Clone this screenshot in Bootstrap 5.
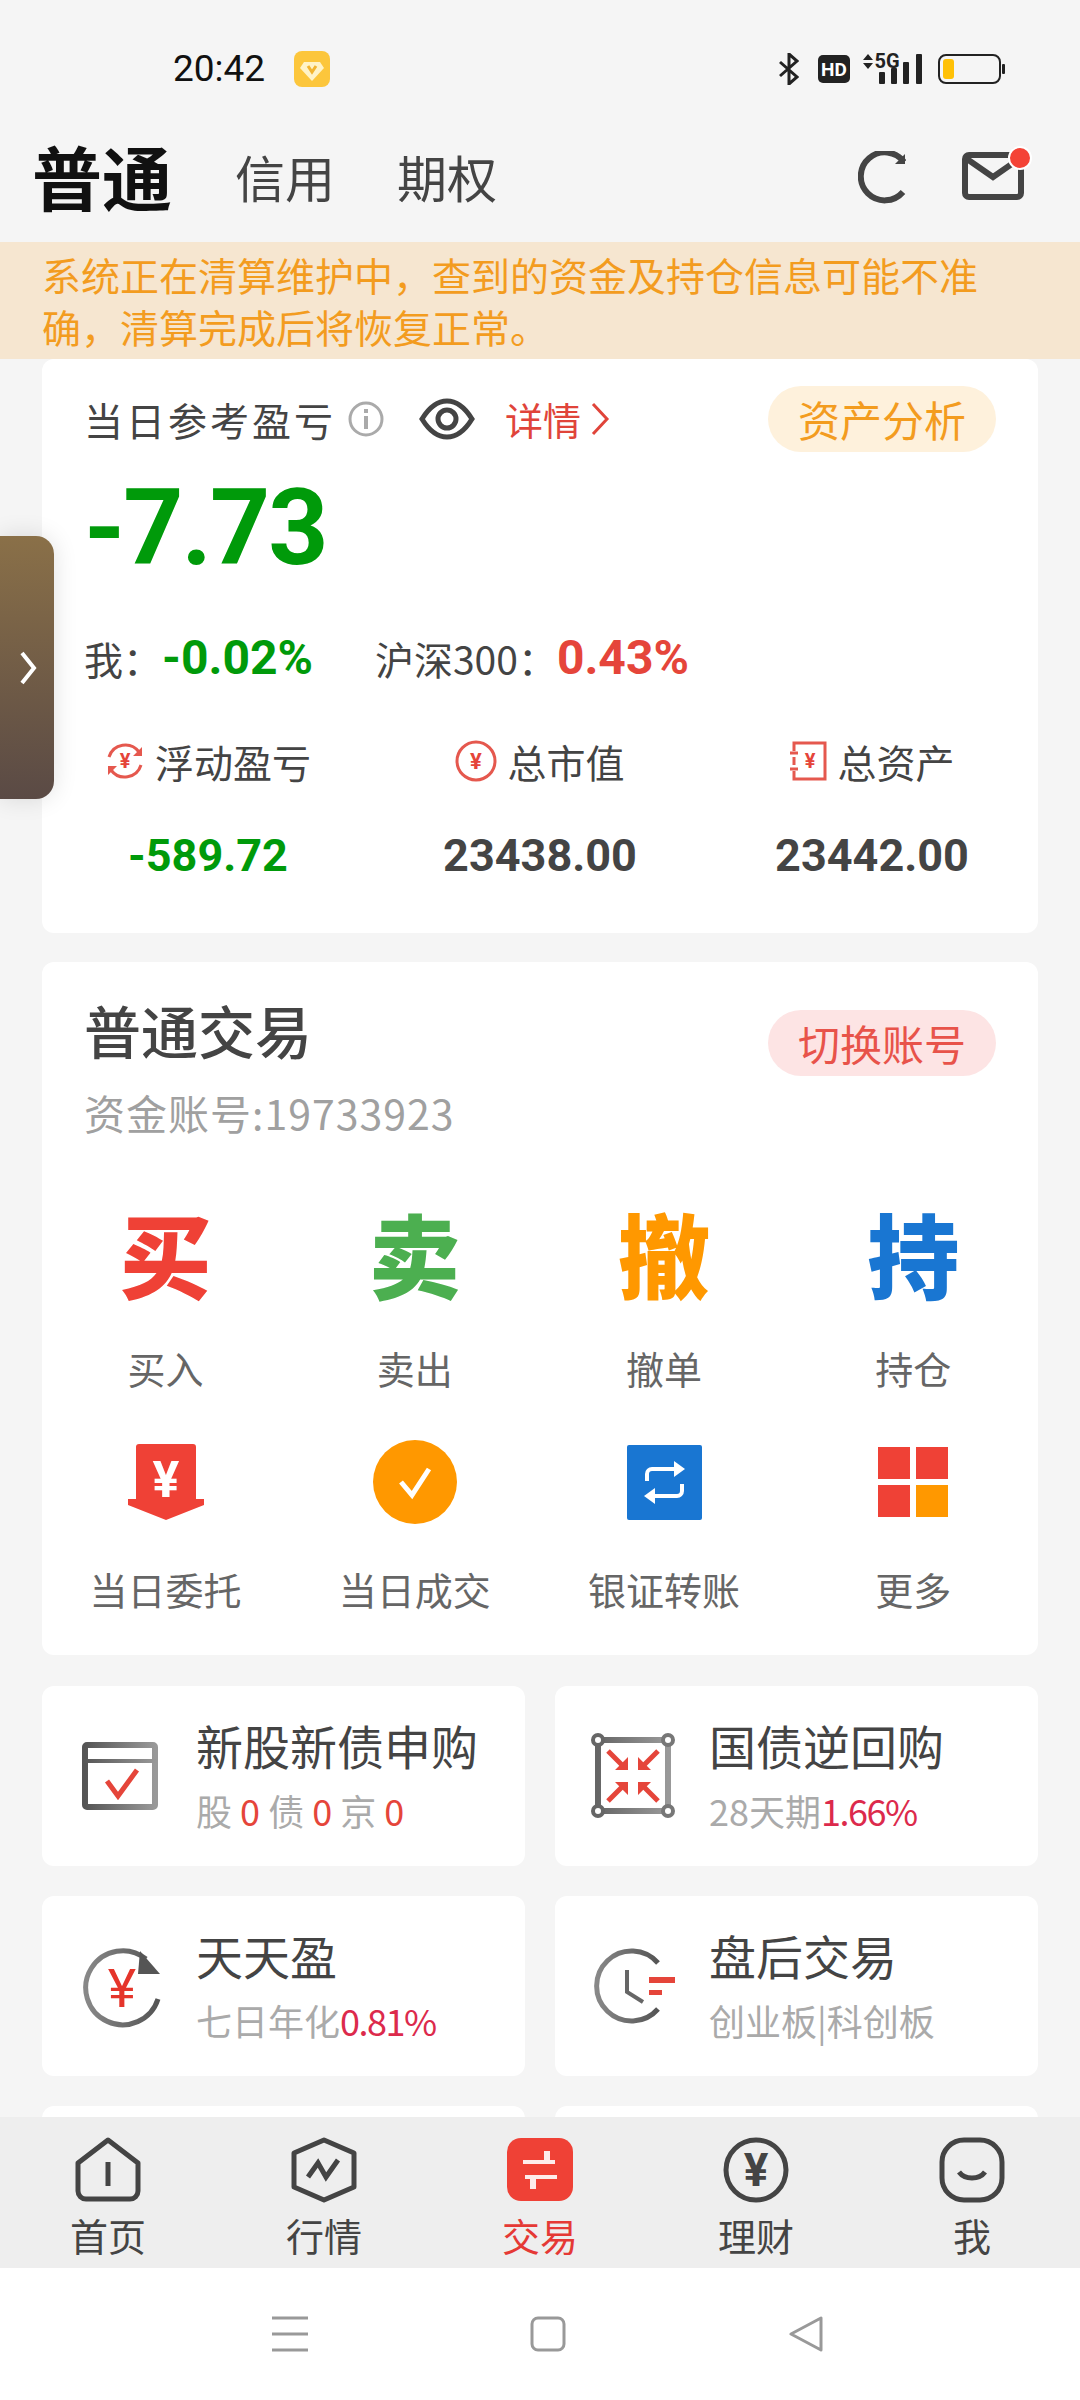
<!DOCTYPE html>
<html lang="zh-CN">
<head>
    <meta charset="UTF-8">
    <meta name="viewport" content="width=device-width, initial-scale=1.0">
    <title>普通交易</title>
    <link rel="stylesheet" href="https://cdn.jsdelivr.net/npm/bootstrap@5.3.0/dist/css/bootstrap.min.css">
    <style>
        body { width: 1080px; height: 2400px; overflow: hidden; background: #f5f5f5; color: #444; font-family: "Noto Sans CJK SC", "Noto Sans", sans-serif; }
        svg { display: block; flex: none; }
        svg text { font-family: Roboto, sans-serif; font-weight: 700; text-anchor: middle; }
        svg text.yen-light { font-weight: 400; }
        .num { font-family: Roboto, "Liberation Sans", sans-serif; font-weight: 700; }
        .status-bar { height: 110px; padding: 28px 75px 0 173px; }
        .clock { font-family: Roboto, sans-serif; font-size: 37px; color: #111; }
        .vip-badge { margin-left: 29px; }
        .st-hd { margin-left: 19px; }
        .st-net { margin-left: 12px; }
        .st-batt { margin-left: 14px; }
        .top-bar { height: 132px; padding: 0 56px 0 32px; }
        .top-main { font-size: 70px; font-weight: 700; color: #111; margin-right: 63px; line-height: 1; }
        .top-sub { font-size: 50px; color: #444; margin-right: 62px; line-height: 1; }
        .top-refresh { margin-top: 3px; }
        .mail-box { margin-left: 56px; }
        .mail-dot { width: 24px; height: 24px; background: #f44336; border: 2px solid #fff; right: -8px; top: -6px; }
        .notice-bar { background: #f6e6d0; color: #f39c1f; font-size: 39px; line-height: 52px; padding: 6px 80px 0 42px; height: 117px; }
        .scroller { height: 1758px; overflow: hidden; padding: 0 42px; }
        .panel { border: 0; border-radius: 12px; background: #fff; }
        .panel-profit { height: 574px; padding: 27px 42px 0 42px; }
        .profit-label { font-size: 39px; letter-spacing: 3px; color: #444; }
        .info-icon { margin-left: 12px; }
        .eye-icon { margin-left: 35px; }
        .detail-link { font-size: 38px; color: #e0443a; line-height: 1; margin-left: 30px; }
        .detail-arrow { margin-left: 9px; }
        .pill-btn { width: 228px; height: 66px; border-radius: 33px; font-size: 42px; line-height: 1; }
        .pill-orange { background: #fef1dc; color: #f39c1f; }
        .pill-red { background: #fde4e4; color: #e8534a; margin-top: 16px; }
        .row-top { height: 66px; }
        .profit-big { height: 146px; font-size: 105px; line-height: 154px; color: #009a0a; letter-spacing: -2px; }
        .row-compare { height: 120px; font-size: 39px; }
        .row-compare .num { font-size: 48px; }
        .compare-index { margin-left: 62px; }
        .text-up { color: #e5453a; }
        .text-down { color: #009a0a; }
        .metric-grid { margin: 0 -42px; display: grid; grid-template-columns: repeat(3, 332px); }
        .metric-head { height: 86px; font-size: 39px; gap: 10px; }
        .metric-value { height: 104px; font-size: 45px; color: #444; }
        .metric-value.text-down { color: #009a0a; }
        .panel-trade { height: 693px; margin-top: 29px; padding-top: 32px; }
        .trade-head { padding: 0 42px; height: 75px; }
        .trade-title { font-size: 57px; font-weight: 500; line-height: 70px; }
        .account-no { font-size: 41px; letter-spacing: 1px; line-height: 60px; color: #a0a0a0; padding-left: 42px; margin-top: 13px; }
        .action-grid { display: grid; grid-template-columns: repeat(4, 1fr); row-gap: 39px; margin-top: 69px; margin-left: -1px; }
        .action-pic { height: 100px; }
        .action-word { font-size: 92px; font-weight: 900; line-height: 1; padding-bottom: 18px; }
        .action-label { height: 50px; margin-top: 32px; font-size: 38px; line-height: 50px; color: #666; }
        .word-buy { color: #ef4136; }
        .word-sell { color: #4caf50; }
        .word-undo { color: #ff9800; }
        .word-hold { color: #1976d2; }
        .tile-grid { display: grid; grid-template-columns: 483px 483px; gap: 30px; margin-top: 31px; }
        .tile { height: 180px; padding-left: 36px; }
        .tile-pic { width: 118px; }
        .tile-title { font-size: 47px; line-height: 50px; color: #444; padding-top: 2px; }
        .tile-sub { font-size: 36px; line-height: 50px; color: #aaa; margin-top: 15px; white-space: nowrap; }
        .tile-red { color: #e5453a; }
        .tile-rose { color: #dc2a4c; letter-spacing: -1.5px; }
        .tab-bar { height: 151px; background: #eee; padding-top: 20px; }
        .tab-item { width: 216px; }
        .tab-label { font-size: 38px; line-height: 50px; margin-top: 7px; color: #444; }
        .tab-on { color: #e53935; }
        .sys-nav { height: 132px; background: #fff; padding-left: 16px; gap: 222px; }
        .side-handle { left: 0; top: 536px; width: 54px; height: 263px; border-radius: 0 18px 18px 0; background: linear-gradient(#8a7048, #5a4a45); box-shadow: 0 0 24px rgba(0,0,0,.12); padding-left: 19px; }
    </style>
</head>
<body class="position-relative">

    <div class="status-bar d-flex align-items-center">
        <span class="clock">20:42</span>
        <svg class="vip-badge" width="36" height="36" viewBox="0 0 36 36">
            <rect width="36" height="36" rx="8" fill="#fcc63c"/>
            <path d="M10 11h16l4 6-12 13L6 17z" fill="#fff3c8"/>
            <path d="M14 15l4 6 4-6" fill="none" stroke="#f2b430" stroke-width="3"/>
        </svg>
        <div class="ms-auto d-flex align-items-center">
            <svg width="21" height="32" viewBox="0 0 21 32"><path d="M2 9l17 15-8 7V1l8 7L2 23" fill="none" stroke="#222" stroke-width="3"/></svg>
            <svg class="st-hd" width="32" height="28" viewBox="0 0 32 28">
                <rect width="32" height="28" rx="5" fill="#222"/>
                <text x="16" y="21" font-size="19" fill="#fff">HD</text>
            </svg>
            <svg class="st-net" width="62" height="32" viewBox="0 0 62 32">
                <path d="M1 7l5-6 5 6zM1 10l5 6 5-6z" fill="#222"/>
                <text x="25" y="15" font-size="20" fill="#222">5G</text>
                <rect x="17" y="19" width="6" height="12" rx="1" fill="#222"/>
                <rect x="29" y="15" width="6" height="16" rx="1" fill="#222"/>
                <rect x="41" y="9" width="6" height="22" rx="1" fill="#222"/>
                <rect x="54" y="1" width="6" height="30" rx="1" fill="#222"/>
            </svg>
            <svg class="st-batt" width="67" height="30" viewBox="0 0 67 30">
                <rect x="1" y="1" width="61" height="28" rx="7" fill="none" stroke="#222" stroke-width="2"/>
                <rect x="5" y="5" width="11" height="20" rx="3" fill="#ffc107"/>
                <rect x="64" y="10" width="3" height="10" rx="1" fill="#222"/>
            </svg>
        </div>
    </div>

    <div class="top-bar d-flex align-items-center">
        <span class="top-main">普通</span>
        <span class="top-sub">信用</span>
        <span class="top-sub">期权</span>
        <svg class="top-refresh ms-auto" width="48" height="54" viewBox="0 0 48 54">
            <path d="M46 11A24 24 0 1 0 45 41" fill="none" stroke="#444" stroke-width="6"/>
            <path d="M47 3v10H37z" fill="#444"/>
        </svg>
        <div class="mail-box position-relative">
            <svg width="62" height="48" viewBox="0 0 62 48">
                <rect x="3" y="3" width="56" height="42" rx="4" fill="none" stroke="#444" stroke-width="6"/>
                <path d="M5 7l26 18 26-18" fill="none" stroke="#444" stroke-width="6"/>
            </svg>
            <span class="mail-dot position-absolute rounded-circle"></span>
        </div>
    </div>

    <div class="notice-bar">系统正在清算维护中，查到的资金及持仓信息可能不准确，清算完成后将恢复正常。</div>

    <div class="scroller">
        <div class="card panel panel-profit">
            <div class="row-top d-flex flex-row align-items-center">
                <span class="profit-label">当日参考盈亏</span>
                <svg class="info-icon" width="36" height="36" viewBox="0 0 36 36">
                    <circle cx="18" cy="18" r="16" fill="none" stroke="#aaa" stroke-width="3"/>
                    <rect x="16" y="15" width="4" height="13" fill="#aaa"/>
                    <rect x="16" y="8" width="4" height="4" fill="#aaa"/>
                </svg>
                <svg class="eye-icon" width="56" height="42" viewBox="0 0 56 42">
                    <path d="M3 21C11 8 19 3 28 3s17 5 25 18C45 34 37 39 28 39S11 34 3 21z" fill="none" stroke="#444" stroke-width="5"/>
                    <circle cx="28" cy="21" r="9" fill="none" stroke="#444" stroke-width="5"/>
                </svg>
                <span class="detail-link">详情</span>
                <svg class="detail-arrow" width="20" height="34" viewBox="0 0 20 34"><path d="M3 2l14 15L3 32" fill="none" stroke="#e0443a" stroke-width="3"/></svg>
                <span class="pill-btn pill-orange ms-auto d-flex align-items-center justify-content-center">资产分析</span>
            </div>
            <div class="profit-big num">-7.73</div>
            <div class="row-compare d-flex align-items-center">
                <span>我：</span>
                <span class="num text-down">-0.02%</span>
                <span class="compare-index">沪深300：</span>
                <span class="num text-up">0.43%</span>
            </div>
            <div class="metric-grid">
                <div>
                    <div class="metric-head d-flex align-items-center justify-content-center">
                        <svg width="40" height="42" viewBox="0 0 40 42">
                            <path d="M4 17A17 17 0 0 1 34 12M36 25A17 17 0 0 1 6 30" fill="none" stroke="#e5584e" stroke-width="3"/>
                            <path d="M37 7v9h-9zM3 35v-9h9z" fill="#e5584e"/>
                            <text x="20" y="28" font-size="20" fill="#e5453a">¥</text>
                        </svg>
                        <span>浮动盈亏</span>
                    </div>
                    <div class="metric-value num text-down d-flex align-items-center justify-content-center">-589.72</div>
                </div>
                <div>
                    <div class="metric-head d-flex align-items-center justify-content-center">
                        <svg width="42" height="42" viewBox="0 0 42 42">
                            <circle cx="21" cy="21" r="19" fill="none" stroke="#e5584e" stroke-width="3"/>
                            <text x="21" y="29" font-size="22" fill="#e5453a">¥</text>
                        </svg>
                        <span>总市值</span>
                    </div>
                    <div class="metric-value num d-flex align-items-center justify-content-center">23438.00</div>
                </div>
                <div>
                    <div class="metric-head d-flex align-items-center justify-content-center">
                        <svg width="38" height="40" viewBox="0 0 38 40">
                            <path d="M5 10V2h31v36H5v-8M5 16v8" fill="none" stroke="#e5584e" stroke-width="3"/>
                            <path d="M1 12h8M1 28h8" stroke="#e5584e" stroke-width="3"/>
                            <text x="21" y="27" font-size="20" fill="#e5453a">¥</text>
                        </svg>
                        <span>总资产</span>
                    </div>
                    <div class="metric-value num d-flex align-items-center justify-content-center">23442.00</div>
                </div>
            </div>
        </div>

        <div class="card panel panel-trade">
            <div class="trade-head d-flex justify-content-between align-items-start">
                <span class="trade-title">普通交易</span>
                <span class="pill-btn pill-red d-flex align-items-center justify-content-center">切换账号</span>
            </div>
            <div class="account-no">资金账号:19733923</div>
            <div class="action-grid text-center">
                <div>
                    <div class="action-pic d-flex align-items-center justify-content-center action-word word-buy">买</div>
                    <div class="action-label">买入</div>
                </div>
                <div>
                    <div class="action-pic d-flex align-items-center justify-content-center action-word word-sell">卖</div>
                    <div class="action-label">卖出</div>
                </div>
                <div>
                    <div class="action-pic d-flex align-items-center justify-content-center action-word word-undo">撤</div>
                    <div class="action-label">撤单</div>
                </div>
                <div>
                    <div class="action-pic d-flex align-items-center justify-content-center action-word word-hold">持</div>
                    <div class="action-label">持仓</div>
                </div>
                <div>
                    <div class="action-pic d-flex align-items-center justify-content-center">
                        <svg width="76" height="76" viewBox="0 0 76 76">
                            <path d="M11 0h54a3 3 0 0 1 3 3v52h8v6L38 76 0 61v-6h8V3a3 3 0 0 1 3-3z" fill="#ef4136"/>
                            <text x="38" y="53" font-size="50" fill="#fff">¥</text>
                        </svg>
                    </div>
                    <div class="action-label">当日委托</div>
                </div>
                <div>
                    <div class="action-pic d-flex align-items-center justify-content-center">
                        <svg width="84" height="84" viewBox="0 0 84 84">
                            <circle cx="42" cy="42" r="42" fill="#ff9800"/>
                            <path d="M28 42l11 13 17-26" fill="none" stroke="#fff" stroke-width="5"/>
                        </svg>
                    </div>
                    <div class="action-label">当日成交</div>
                </div>
                <div>
                    <div class="action-pic d-flex align-items-center justify-content-center">
                        <svg width="75" height="75" viewBox="0 0 75 75">
                            <rect width="75" height="75" rx="2" fill="#1976d2"/>
                            <path d="M20 36v-7a5 5 0 0 1 5-5h24M55 39v7a5 5 0 0 1-5 5H26" fill="none" stroke="#fff" stroke-width="4"/>
                            <path d="M47 16l11 8-11 8zM28 43l-11 8 11 8z" fill="#fff"/>
                        </svg>
                    </div>
                    <div class="action-label">银证转账</div>
                </div>
                <div>
                    <div class="action-pic d-flex align-items-center justify-content-center">
                        <svg width="70" height="70" viewBox="0 0 70 70">
                            <rect width="32" height="32" fill="#ef4136"/>
                            <rect x="38" width="32" height="32" fill="#ef4136"/>
                            <rect y="38" width="32" height="32" fill="#ef4136"/>
                            <rect x="38" y="38" width="32" height="32" fill="#ff9800"/>
                        </svg>
                    </div>
                    <div class="action-label">更多</div>
                </div>
            </div>
        </div>

        <div class="tile-grid">
            <div class="card panel tile flex-row align-items-center">
                <div class="tile-pic">
                    <svg width="90" height="90" viewBox="0 0 90 90">
                        <defs><linearGradient id="grayA" x1="0" x2="1" y1="0" y2="0"><stop offset="0" stop-color="#555"/><stop offset="1" stop-color="#999"/></linearGradient></defs>
                        <rect x="7" y="14" width="70" height="62" rx="2" fill="none" stroke="url(#grayA)" stroke-width="6"/>
                        <rect x="5" y="28" width="74" height="4" fill="url(#grayA)"/>
                        <path d="M29 50l11 15 19-26" fill="none" stroke="#e5453a" stroke-width="5"/>
                    </svg>
                </div>
                <div>
                    <div class="tile-title">新股新债申购</div>
                    <div class="tile-sub">股 <span class="tile-red">0</span> 债 <span class="tile-red">0</span> 京 <span class="tile-red">0</span></div>
                </div>
            </div>
            <div class="card panel tile flex-row align-items-center">
                <div class="tile-pic">
                    <svg width="90" height="90" viewBox="0 0 90 90">
                        <defs><linearGradient id="grayB" x1="0" x2="1" y1="0" y2="0"><stop offset="0" stop-color="#666"/><stop offset="1" stop-color="#999"/></linearGradient></defs>
                        <rect x="7" y="9" width="70" height="71" fill="none" stroke="url(#grayB)" stroke-width="6"/>
                        <circle cx="7" cy="9" r="5" fill="#fff" stroke="#666" stroke-width="4"/>
                        <circle cx="77" cy="9" r="5" fill="#fff" stroke="#777" stroke-width="4"/>
                        <circle cx="7" cy="80" r="5" fill="#fff" stroke="#666" stroke-width="4"/>
                        <circle cx="77" cy="80" r="5" fill="#fff" stroke="#777" stroke-width="4"/>
                        <g fill="none" stroke="#e5453a" stroke-width="5">
                            <path d="M17 20l16 16M67 20L51 36M17 70l16-16M67 70L51 54"/>
                        </g>
                        <path d="M24 39h13V26zM60 39H47V26zM24 51h13v13zM60 51H47v13z" fill="#e5453a"/>
                    </svg>
                </div>
                <div>
                    <div class="tile-title">国债逆回购</div>
                    <div class="tile-sub">28天期<span class="tile-rose">1.66%</span></div>
                </div>
            </div>
            <div class="card panel tile flex-row align-items-center">
                <div class="tile-pic">
                    <svg width="90" height="90" viewBox="0 0 90 90">
                        <defs><linearGradient id="grayC" x1="0" x2="1" y1="0" y2="0"><stop offset="0" stop-color="#888"/><stop offset="1" stop-color="#555"/></linearGradient></defs>
                        <path d="M80 58A37 37 0 1 1 68 18" fill="none" stroke="url(#grayC)" stroke-width="5"/>
                        <path d="M62 10l20 23H60z" fill="#555"/>
                        <text class="yen-light" x="44" y="66" font-size="54" fill="#e5352b">¥</text>
                    </svg>
                </div>
                <div>
                    <div class="tile-title">天天盈</div>
                    <div class="tile-sub">七日年化<span class="tile-rose">0.81%</span></div>
                </div>
            </div>
            <div class="card panel tile flex-row align-items-center">
                <div class="tile-pic">
                    <svg width="90" height="90" viewBox="0 0 90 90">
                        <defs><linearGradient id="grayD" x1="0" x2="1" y1="0" y2="0"><stop offset="0" stop-color="#888"/><stop offset="1" stop-color="#555"/></linearGradient></defs>
                        <path d="M67 22A35 35 0 1 0 67 68" fill="none" stroke="url(#grayD)" stroke-width="5"/>
                        <path d="M36 29v22l16 10" fill="none" stroke="#666" stroke-width="4"/>
                        <rect x="58" y="36" width="26" height="6" fill="#e5453a"/>
                        <rect x="58" y="49" width="13" height="5" fill="#e5453a"/>
                    </svg>
                </div>
                <div>
                    <div class="tile-title">盘后交易</div>
                    <div class="tile-sub">创业板|科创板</div>
                </div>
            </div>
            <div class="card panel tile"></div>
            <div class="card panel tile"></div>
        </div>
    </div>

    <div class="tab-bar d-flex">
        <div class="tab-item d-flex flex-column align-items-center">
            <svg width="66" height="66" viewBox="0 0 66 66">
                <path d="M33 3L63 26V54a8 8 0 0 1-8 8H11a8 8 0 0 1-8-8V26z" fill="none" stroke="#444" stroke-width="5" stroke-linejoin="round"/>
                <path d="M33 25v24" stroke="#444" stroke-width="5"/>
            </svg>
            <span class="tab-label">首页</span>
        </div>
        <div class="tab-item d-flex flex-column align-items-center">
            <svg width="66" height="66" viewBox="0 0 66 66">
                <path d="M33 3l30 13v34L33 63 3 50V16z" fill="none" stroke="#444" stroke-width="5" stroke-linejoin="round"/>
                <path d="M17 40l10-14 8 14 12-17" fill="none" stroke="#444" stroke-width="5"/>
            </svg>
            <span class="tab-label">行情</span>
        </div>
        <div class="tab-item d-flex flex-column align-items-center">
            <svg width="66" height="66" viewBox="0 0 66 66">
                <rect y="1" width="66" height="63" rx="14" fill="#ef4136"/>
                <path d="M16 27h32V23H43V14L37 14V23H16zM50 38H18v4h5v10l6 0V42H50z" fill="#fff" opacity=".9"/>
            </svg>
            <span class="tab-label tab-on">交易</span>
        </div>
        <div class="tab-item d-flex flex-column align-items-center">
            <svg width="66" height="66" viewBox="0 0 66 66">
                <circle cx="33" cy="33" r="30" fill="none" stroke="#444" stroke-width="5"/>
                <text x="33" y="49" font-size="46" fill="#444">¥</text>
            </svg>
            <span class="tab-label">理财</span>
        </div>
        <div class="tab-item d-flex flex-column align-items-center">
            <svg width="66" height="66" viewBox="0 0 66 66">
                <rect x="3" y="3" width="60" height="60" rx="22" fill="none" stroke="#444" stroke-width="5"/>
                <path d="M20 35c6 8 20 8 26 0" fill="none" stroke="#444" stroke-width="5"/>
            </svg>
            <span class="tab-label">我</span>
        </div>
    </div>

    <div class="sys-nav d-flex align-items-center justify-content-center">
        <svg width="36" height="36" viewBox="0 0 36 36"><path d="M0 2h36M0 18h36M0 34h36" stroke="#999" stroke-width="3"/></svg>
        <svg width="36" height="36" viewBox="0 0 36 36"><rect x="2" y="2" width="32" height="32" rx="6" fill="none" stroke="#999" stroke-width="3"/></svg>
        <svg width="36" height="36" viewBox="0 0 36 36"><path d="M33 2v32L3 18z" fill="none" stroke="#999" stroke-width="3" stroke-linejoin="round"/></svg>
    </div>

    <div class="side-handle position-absolute d-flex align-items-center">
        <svg width="18" height="34" viewBox="0 0 18 34"><path d="M3 2l12 15L3 32" fill="none" stroke="#fff" stroke-width="4"/></svg>
    </div>

    <script src="https://cdn.jsdelivr.net/npm/bootstrap@5.3.0/dist/js/bootstrap.bundle.min.js"></script>
</body>
</html>
